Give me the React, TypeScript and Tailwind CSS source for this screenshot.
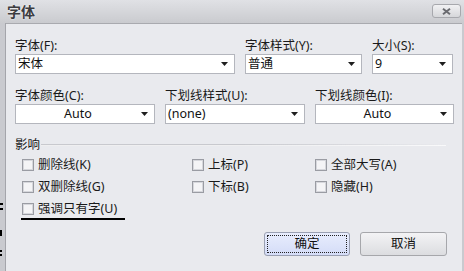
import React from "react";

const Arrow = () => (
  <svg width="7" height="4" viewBox="0 0 7 4" className="shrink-0">
    <path d="M0 0 H7 L3.5 4 Z" fill="#1e1e1e" />
  </svg>
);

function Select({ value, w, align = "left" }: { value: string; w: string; align?: "left" | "center" }) {
  return (
    <div className={`${w} h-[20px] bg-white border border-[#b4b6bd] flex items-center`}>
      <div className={`flex-1 ${align === "center" ? "text-center pl-[4px]" : "pl-[2px]"} text-[12.5px] leading-none text-[#111]`}>{value}</div>
      <div className="w-[18px] flex justify-center pr-[2px]">
        <Arrow />
      </div>
    </div>
  );
}

function Field({ label, value, w, align }: { label: string; value: string; w: string; align?: "left" | "center" }) {
  return (
    <div className="flex flex-col">
      <div className="h-[16px] text-[12.5px] leading-[16px] text-[#1a1a1a] whitespace-nowrap">{label}</div>
      <Select value={value} w={w} align={align} />
    </div>
  );
}

function Check({ label }: { label: string }) {
  return (
    <div className="flex items-center h-[22px] gap-[4px]">
      <div className="w-[12px] h-[12px] border border-[#9a9ca3] bg-[#f4f4f6] shadow-[inset_0_0_0_1px_#d6d7dc]" />
      <span className="text-[12.5px] leading-none text-[#1a1a1a] whitespace-nowrap">{label}</span>
    </div>
  );
}

export default function App() {
  return (
    <div className="relative w-[464px] h-[271px] bg-[#c9cacf] flex flex-col overflow-hidden font-['Noto_Sans','Noto_Sans_CJK_SC',sans-serif]">
      {/* title bar */}
      <div className="h-[23px] shrink-0 flex items-center justify-between pl-[7px] pr-[3px] bg-gradient-to-b from-[#e0e1e5] to-[#cacbcf]">
        <span className="text-[14px] font-bold text-[#3c3c3f] leading-none [text-shadow:0_0_2px_#ffffff]">字体</span>
        <div className="w-[29px] h-[14px] mt-[-1px] rounded-[3px] border border-[#a7a8ad] bg-gradient-to-b from-[#f1f1f3] to-[#d6d7da] flex items-center justify-center">
          <svg width="9" height="7" viewBox="0 0 9 7">
            <path d="M1 0.8 L8 6.2 M8 0.8 L1 6.2" stroke="#6a6b70" strokeWidth="2" />
          </svg>
        </div>
      </div>
      <div className="flex flex-1">
        <div className="w-[5px] bg-[#c9cacf]" />
        <div className="w-px bg-[#a4a5ab]" />
        {/* client */}
        <div className="flex-1 bg-[#e9eaee] border-t border-[#a9aaaf] pl-[9px] pt-[14px] flex flex-col">
          <div className="flex gap-[11px]">
            <Field label="字体(F):" value="宋体" w="w-[220px]" />
            <div className="flex gap-[10px] -ml-px">
              <Field label="字体样式(Y):" value="普通" w="w-[117px]" />
              <Field label="大小(S):" value="9" w="w-[81px]" />
            </div>
          </div>
          <div className="flex gap-[10px] mt-[14px]">
            <Field label="字体颜色(C):" value="Auto" w="w-[140px]" align="center" />
            <Field label="下划线样式(U):" value="(none)" w="w-[140px]" />
            <Field label="下划线颜色(I):" value="Auto" w="w-[139px]" align="center" />
          </div>
          <div className="flex items-center mt-[13px] h-[16px]">
            <span className="text-[12.5px] leading-none text-[#1a1a1a]">影响</span>
            <div className="ml-[1px] w-[405px] h-[2px] bg-gradient-to-r from-[#c8c9ce] via-[#c8c9ce] to-transparent border-b border-white/70" />
          </div>
          <div className="flex pl-[7px] pt-[1px]">
            <div className="w-[170px] flex flex-col">
              <Check label="删除线(K)" />
              <Check label="双删除线(G)" />
              <div className="w-[104px] -ml-px pl-px border-b-2 border-black h-[22px]">
                <Check label="强调只有字(U)" />
              </div>
            </div>
            <div className="w-[123px] flex flex-col">
              <Check label="上标(P)" />
              <Check label="下标(B)" />
            </div>
            <div className="flex flex-col">
              <Check label="全部大写(A)" />
              <Check label="隐藏(H)" />
            </div>
          </div>
          <div className="flex justify-end gap-[10px] pr-[15px] mt-[12px]">
            <div className="w-[86px] h-[24px] rounded-[3px] border border-[#9aa0b2] bg-gradient-to-b from-[#e8edfd] to-[#d4dcf7] p-[2px]">
              <div className="w-full h-full border border-dotted border-[#222] flex items-center justify-center text-[12.5px] leading-none text-[#111]">确定</div>
            </div>
            <div className="w-[87px] h-[24px] rounded-[3px] border border-[#a6a7ab] bg-gradient-to-b from-[#f3f3f5] to-[#dcdde0] flex items-center justify-center text-[12.5px] leading-none text-[#111]">取消</div>
          </div>
        </div>
        <div className="w-[2px] bg-[#c9cacf]" />
      </div>
      {/* background artifacts at left edge */}
      <div className="absolute left-0 top-[203px] w-[3px] h-[2px] bg-black" />
      <div className="absolute left-0 top-[208px] w-[3px] h-[2px] bg-black" />
      <div className="absolute left-0 top-[230px] w-[2px] h-[6px] bg-black" />
      <div className="absolute left-0 top-[250px] w-[2px] h-[2px] bg-black" />
      <div className="absolute left-0 top-[254px] w-[2px] h-[2px] bg-black" />
    </div>
  );
}
